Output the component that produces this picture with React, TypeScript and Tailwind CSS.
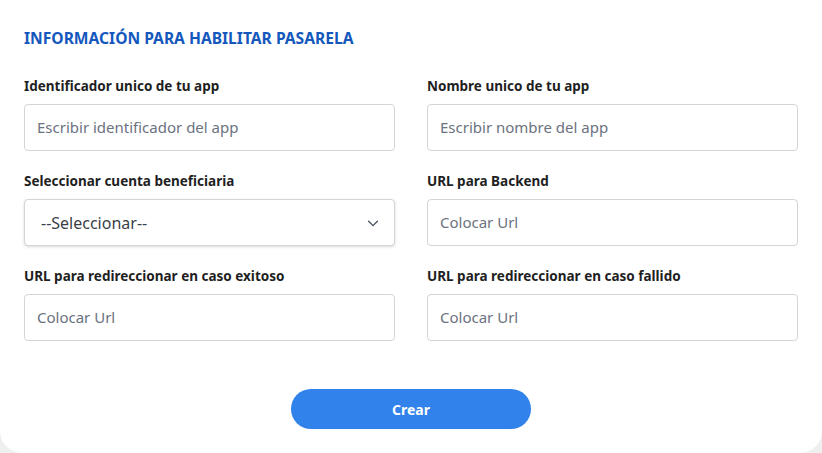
import React from "react";

function Field({ label, placeholder }: { label: string; placeholder: string }) {
  return (
    <div className="flex flex-col">
      <label className="h-[34px] flex items-center text-[13.5px] font-bold text-[#1f1f1f] leading-none">
        {label}
      </label>
      <div className="h-[47px] rounded-[4px] border border-[#d4d4da] bg-white flex items-center px-[12px]">
        <span className="text-[15px] text-[#6b7280]">{placeholder}</span>
      </div>
    </div>
  );
}

function SelectField({ label }: { label: string }) {
  return (
    <div className="flex flex-col">
      <label className="h-[34px] flex items-center text-[13.5px] font-bold text-[#1f1f1f] leading-none">
        {label}
      </label>
      <div className="h-[47px] rounded-[4px] border border-[#d4d4da] bg-white flex items-center justify-between pl-[16px] pr-[14px] shadow-[0_1px_3px_rgba(0,0,0,0.15)]">
        <span className="text-[16px] text-[#3a3f47]">--Seleccionar--</span>
        <svg width="14" height="14" viewBox="0 0 16 16" fill="none">
          <path d="M3 6l5 5 5-5" stroke="#4b5563" strokeWidth="1.6" strokeLinecap="round" strokeLinejoin="round" />
        </svg>
      </div>
    </div>
  );
}

export default function App() {
  return (
    <div
      className="w-[822px] h-[453px] bg-[#efefef]"
      style={{ fontFamily: '"Noto Sans", "Open Sans", sans-serif' }}
    >
      <div className="w-full h-full bg-white rounded-b-[22px] px-[24px] pt-[27px]">
        <h1 className="text-[15.6px] font-bold text-[#1457bd] leading-[22px]">
          INFORMACIÓN PARA HABILITAR PASARELA
        </h1>
        <div className="grid grid-cols-2 gap-x-[32px] gap-y-[14px] mt-[21px]">
          <Field label="Identificador unico de tu app" placeholder="Escribir identificador del app" />
          <Field label="Nombre unico de tu app" placeholder="Escribir nombre del app" />
          <SelectField label="Seleccionar cuenta beneficiaria" />
          <Field label="URL para Backend" placeholder="Colocar Url" />
          <Field label="URL para redireccionar en caso exitoso" placeholder="Colocar Url" />
          <Field label="URL para redireccionar en caso fallido" placeholder="Colocar Url" />
        </div>
        <div className="flex justify-center mt-[48px]">
          <button className="w-[240px] h-[40px] rounded-full bg-[#3182ea] text-white text-[14px] font-bold">
            Crear
          </button>
        </div>
      </div>
    </div>
  );
}
